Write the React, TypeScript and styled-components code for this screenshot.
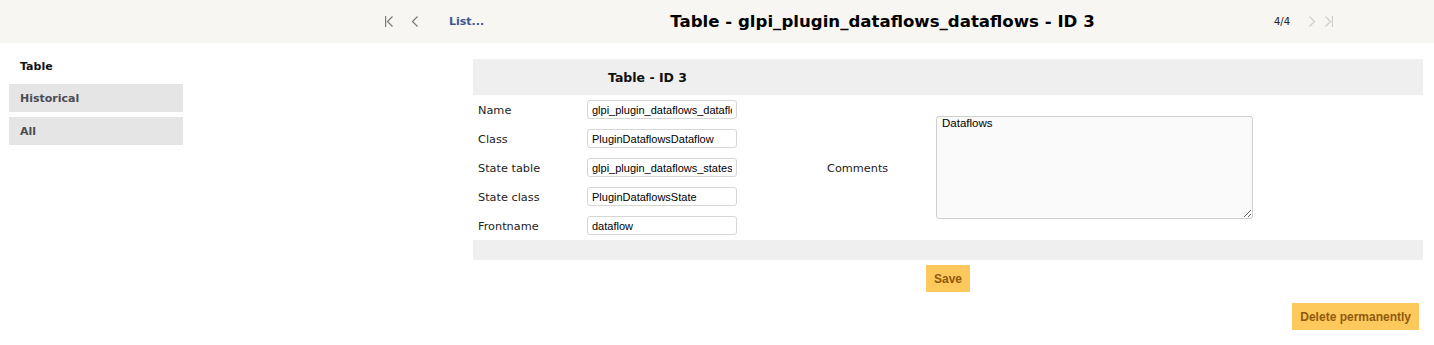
import { Fragment } from "react";
import styled, { createGlobalStyle } from "styled-components";

const GlobalStyle = createGlobalStyle`
	body {
		margin: 0;
		background: #fff;
		font-family: "DejaVu Sans", Verdana, sans-serif;
		font-size: 11px;
		color: #222;
	}
`;

const HeaderBar = styled.div`
	height: 43px;
	background: #f7f6f2;
	display: flex;
	align-items: center;
`;

const NavGroup = styled.div<{ $left?: number; $right?: number }>`
	display: flex;
	align-items: center;
	margin-left: ${(p) => p.$left ?? 0}px;
	margin-right: ${(p) => p.$right ?? 0}px;
`;

const NavIcon = styled.span<{ $gap?: number }>`
	display: flex;
	margin-right: ${(p) => p.$gap ?? 0}px;
`;

const ListLink = styled.a`
	color: #3a5693;
	font-weight: bold;
	font-size: 11px;
	text-decoration: none;
`;

const Title = styled.h1`
	flex: 1;
	margin: 0;
	text-align: center;
	font-size: 16.6px;
	font-weight: bold;
	color: #000;
	padding-left: 7px;
`;

const Counter = styled.span`
	font-size: 10px;
	color: #222;
	margin-right: 18px;
`;

const Body = styled.div`
	display: flex;
	align-items: flex-start;
`;

const SideNav = styled.ul`
	list-style: none;
	margin: 8px 0 0 9px;
	padding: 0;
	width: 174px;
	display: flex;
	flex-direction: column;
	gap: 5px;
`;

const Tab = styled.li<{ $active?: boolean }>`
	height: 28px;
	display: flex;
	align-items: center;
	padding-left: 11px;
	font-weight: bold;
	font-size: 11px;
	background: ${(p) => (p.$active ? "transparent" : "#e5e5e5")};
	color: ${(p) => (p.$active ? "#111" : "#4c4c56")};
	padding-top: ${(p) => (p.$active ? "3px" : "0")};
	box-sizing: border-box;
`;

const Main = styled.div`
	margin: 16px 11px 0 auto;
	width: 950px;
	display: flex;
	flex-direction: column;
`;

const FormHead = styled.div`
	height: 36px;
	background: #efefef;
	display: flex;
	align-items: center;
`;

const FormHeadTitle = styled.div`
	width: 349px;
	text-align: center;
	font-weight: bold;
	font-size: 12.5px;
	color: #111;
`;

const FormGrid = styled.div`
	display: grid;
	grid-template-columns: 109px 240px 109px 492px;
	grid-template-rows: repeat(5, 29px);
`;

const Label = styled.div<{ $row: number; $col: number; $span?: number }>`
	grid-row: ${(p) => p.$row} / span ${(p) => p.$span ?? 1};
	grid-column: ${(p) => p.$col};
	display: flex;
	align-items: center;
	padding-left: 5px;
	padding-top: 1px;
	font-size: 11.3px;
	color: #222;
`;

const Cell = styled.div<{ $row: number; $col: number; $span?: number }>`
	grid-row: ${(p) => p.$row} / span ${(p) => p.$span ?? 1};
	grid-column: ${(p) => p.$col};
	display: flex;
	align-items: center;
	padding-left: 5px;
`;

const TextInput = styled.input`
	box-sizing: border-box;
	width: 150px;
	height: 19px;
	border: 1px solid #d6d6d6;
	border-radius: 3px;
	background: #fff;
	padding: 0 4px;
	font-family: "Liberation Sans", Arial, sans-serif;
	font-size: 11px;
	color: #000;
	outline: none;
`;

const TextArea = styled.textarea`
	box-sizing: border-box;
	width: 317px;
	height: 103px;
	border: 1px solid #cfcfcf;
	border-radius: 3px;
	background: #fafafa;
	padding: 0 5px;
	font-family: "Liberation Sans", Arial, sans-serif;
	font-size: 11.5px;
	color: #000;
	resize: both;
	outline: none;
`;

const FormFoot = styled.div`
	height: 20px;
	background: #efefef;
`;

const ButtonRow = styled.div<{ $align: string; $top: number; $right?: number }>`
	display: flex;
	justify-content: ${(p) => p.$align};
	margin-top: ${(p) => p.$top}px;
	padding-right: ${(p) => p.$right ?? 0}px;
`;

const Button = styled.button`
	background: #fec95c;
	color: #8f5a0a;
	border: none;
	height: 27px;
	padding: 0 8px;
	font-family: "Liberation Sans", Arial, sans-serif;
	font-weight: bold;
	font-size: 12px;
	cursor: pointer;
`;

const Chevron = ({ dir, bar, color }: { dir: "l" | "r"; bar?: boolean; color: string }) => (
	<svg width="9" height="11" viewBox="0 0 9 11" fill="none" stroke={color} strokeWidth="1.2">
		{dir === "l" ? (
			<>
				{bar && <line x1="0.6" y1="0" x2="0.6" y2="11" />}
				<polyline points={bar ? "7.5,0.5 2.5,5.5 7.5,10.5" : "6.5,0.5 1.5,5.5 6.5,10.5"} />
			</>
		) : (
			<>
				<polyline points="1.5,0.5 6.5,5.5 1.5,10.5" />
				{bar && <line x1="8.4" y1="0" x2="8.4" y2="11" />}
			</>
		)}
	</svg>
);

const fields = [
	["Name", "glpi_plugin_dataflows_dataflows"],
	["Class", "PluginDataflowsDataflow"],
	["State table", "glpi_plugin_dataflows_states"],
	["State class", "PluginDataflowsState"],
	["Frontname", "dataflow"],
];

export default function App() {
	return (
		<>
			<GlobalStyle />
			<HeaderBar>
				<NavGroup $left={385}>
					<NavIcon $gap={17}>
						<Chevron dir="l" bar color="#7a7a7a" />
					</NavIcon>
					<NavIcon $gap={29}>
						<Chevron dir="l" color="#7a7a7a" />
					</NavIcon>
					<ListLink href="#">List...</ListLink>
				</NavGroup>
				<Title>Table - glpi_plugin_dataflows_dataflows - ID 3</Title>
				<NavGroup $right={101}>
					<Counter>4/4</Counter>
					<NavIcon $gap={7}>
						<Chevron dir="r" color="#cfcfcf" />
					</NavIcon>
					<NavIcon>
						<Chevron dir="r" bar color="#cfcfcf" />
					</NavIcon>
				</NavGroup>
			</HeaderBar>
			<Body>
				<SideNav>
					<Tab $active>Table</Tab>
					<Tab>Historical</Tab>
					<Tab>All</Tab>
				</SideNav>
				<Main>
					<FormHead>
						<FormHeadTitle>Table - ID 3</FormHeadTitle>
					</FormHead>
					<FormGrid>
						{fields.map(([label, value], i) => (
							<Fragment key={label}>
								<Label $row={i + 1} $col={1}>
									{label}
								</Label>
								<Cell $row={i + 1} $col={2}>
									<TextInput defaultValue={value} />
								</Cell>
							</Fragment>
						))}
						<Label $row={1} $col={3} $span={5}>
							Comments
						</Label>
						<Cell $row={1} $col={4} $span={5}>
							<TextArea defaultValue="Dataflows" />
						</Cell>
					</FormGrid>
					<FormFoot />
					<ButtonRow $align="center" $top={5}>
						<Button>Save</Button>
					</ButtonRow>
					<ButtonRow $align="flex-end" $top={11} $right={4}>
						<Button>Delete permanently</Button>
					</ButtonRow>
				</Main>
			</Body>
		</>
	);
}
